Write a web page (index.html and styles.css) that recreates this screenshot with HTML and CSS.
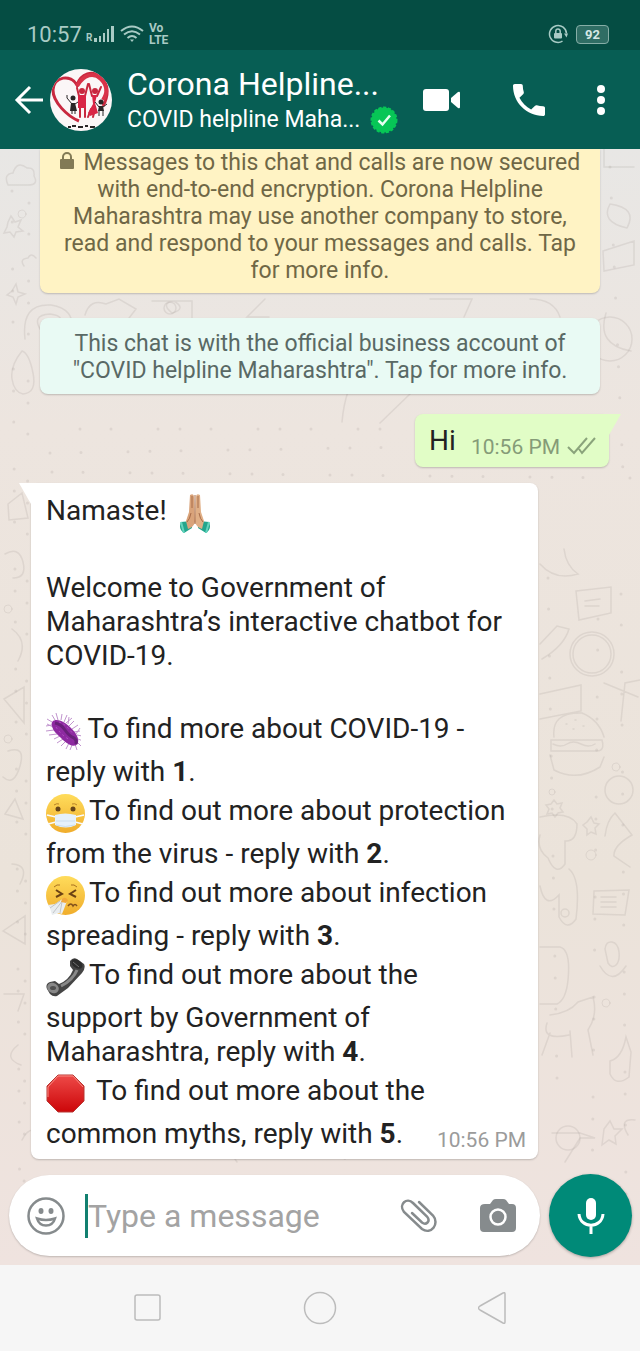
FILE: index.html
```html
<!DOCTYPE html>
<html lang="en">
<head>
  <meta charset="UTF-8" />
  <meta name="viewport" content="width=device-width, initial-scale=1.0"/>
  <title>Corona Helpline Maharashtra</title>
  <link rel="stylesheet" href="styles.css">
</head>
<body>

  <div class="status-bar">
    <div class="status-left">
      <span class="clock">10:57</span>
      <span class="roaming">R</span>
      <svg width="20" height="16" viewBox="0 0 20 16" fill="#a9cbc5"><path d="M0 12h3v4H0zM5 10h2v6H5zM9 7h2v9H9zM13 3h2v13h-2zM17 0h3v16h-3z"/></svg>
      <svg class="wifi" width="24" height="18" viewBox="0 0 24 18" fill="none" stroke="#a9cbc5" stroke-width="2"><path d="M1 6Q12-3 23 6M4 9.500Q12 3 20 9.500M7.500 13Q12 9 16.500 13"/><path d="M10 14.500h4l-2 2.500z" fill="#a9cbc5" stroke="none"/></svg>
      <span class="volte"><span>Vo</span><span>LTE</span></span>
    </div>
    <div class="status-right">
      <svg width="20" height="20" viewBox="0 0 20 20" fill="none" stroke="#a9cbc5" stroke-width="1.500"><path d="M14.500 17.200A8.500 8.500 0 1 1 18.500 9.500"/><path d="M16 9.500h4l-1.500 4z" fill="#a9cbc5" stroke="none"/><rect x="6" y="9" width="8" height="5.500" rx="1" fill="#a9cbc5" stroke="none"/><path d="M7.800 9V7.200a2.200 2.200 0 0 1 4.400 0V9"/></svg>
      <span class="battery">92</span>
    </div>
  </div>

  <header class="chat-header">
    <button class="icon-button" aria-label="Back">
      <svg width="30" height="30" viewBox="0 0 30 30" fill="none" stroke="#fff" stroke-width="3"><path d="M29 15H3M16 2L3 15l13 13"/></svg>
    </button>
    <svg class="avatar" width="62" height="62" viewBox="0 0 62 62">
      <clipPath id="face"><circle cx="31" cy="31" r="31"/></clipPath>
      <g clip-path="url(#face)">
        <rect width="62" height="62" fill="#fbf6f7"/>
        <path d="M29 52C17 47 3 33 3 21C4 7 21 5 27 16C31 4 43 1 50 8C60 16 58 28 53 37" fill="none" stroke="#c8283f" stroke-width="3"/>
        <path d="M27 17C34 5 44 3 51 10C58 17 57 25 53 31" fill="none" stroke="#d93349" stroke-width="4"/>
        <g stroke="#c8283f" stroke-width="2" stroke-linecap="round" fill="none"><path d="M29 27L27 19M35 27L38 15M30 34v14M35 34v14M42 27L39 15M47 27L51 18M41 40l-3 8M45 40l-2 8"/></g>
        <circle cx="32" cy="22" r="3" fill="#c8283f"/><circle cx="45" cy="22" r="3" fill="#c8283f"/>
        <path d="M28 26h8v13h-8zM42 26h5l-2 8 3 10-8 3-2-3 5-9z" fill="#d92545"/>
        <g fill="#292526"><circle cx="23" cy="29" r="2.500"/><circle cx="51" cy="33" r="2.500"/><path d="M21 34h4l2 8h-7zM49 37h4l1 5h-6z"/></g>
        <path d="M22 35l-5-6v-3M25 35l3-2M22 41v4M25 41v4M49 38l-4-5M53 38l4-3M49 41v6M53 41v6" stroke="#292526" stroke-width="1" fill="none"/>
        <path d="M18 58h3m1-1h4m2 1h5m2-1h3m2 1h5" stroke="#292526" stroke-width="2"/>
      </g>
    </svg>
    <div class="contact">
      <h1>Corona Helpline...</h1>
      <p>COVID helpline Maha...
        <svg width="28" height="28" viewBox="0 0 28 28"><circle cx="14" cy="14" r="12.500" fill="#07c656" stroke="#07c656" stroke-width="2" stroke-dasharray="3.200 1.600"/><path d="M8.500 14.500l4 4 7.500-9" fill="none" stroke="#e6fff0" stroke-width="2.500"/></svg>
      </p>
    </div>
    <div class="header-actions">
      <button class="icon-button" aria-label="Video call">
        <svg width="38" height="24" viewBox="0 0 38 24" fill="#fff"><rect y="1" width="26" height="22" rx="3"/><path d="M28 10l7-6q2-1 2 1v14q0 2-2 1l-7-6z"/></svg>
      </button>
      <button class="icon-button" aria-label="Voice call">
        <svg width="32" height="32" viewBox="3 3 18 18" fill="#fff"><path d="M6.620 10.790c1.440 2.830 3.760 5.140 6.590 6.590l2.200-2.200c.270-.270.670-.360 1.020-.240 1.120.370 2.330.570 3.570.570.550 0 1 .450 1 1V20c0 .550-.450 1-1 1C10.610 21 3 13.390 3 4c0-.550.450-1 1-1h3.500c.550 0 1 .450 1 1 0 1.250.200 2.450.570 3.570.110.350.030.740-.250 1.020z"/></svg>
      </button>
      <button class="icon-button" aria-label="More options">
        <svg width="8" height="30" viewBox="0 0 8 30" fill="#fff"><circle cx="4" cy="4" r="4"/><circle cx="4" cy="15" r="4"/><circle cx="4" cy="26" r="4"/></svg>
      </button>
    </div>
  </header>

  <main class="chat">
    <div class="notice notice-security">
      <svg class="lock" width="14" height="18" viewBox="0 0 14 18"><rect y="7" width="14" height="10" rx="1" fill="#827a55"/><path d="M3 8V5a4 4 0 0 1 8 0v3" fill="none" stroke="#827a55" stroke-width="2"/></svg>
      Messages to this chat and calls are now secured<br>with end-to-end encryption. Corona Helpline<br>Maharashtra may use another company to store,<br>read and respond to your messages and calls. Tap<br>for more info.
    </div>
    <div class="notice notice-business">
      This chat is with the official business account of<br>"COVID helpline Maharashtra". Tap for more info.
    </div>

    <div class="message sent">
      <span>Hi</span>
      <span class="time">10:56 PM</span>
      <svg width="29" height="19" viewBox="0 0 29 19" fill="none" stroke="#8aa37b" stroke-width="2"><path d="M1 11l6 6L20 2M12 13l3 4L28 2"/></svg>
    </div>

    <div class="message received">
      <p>Namaste!
        <svg class="emoji hands" width="32" height="39" viewBox="0 0 32 39">
          <path d="M2 28l10-1 1 7-8 5q-6-4-3-11zM30 28l-10-1-1 7 8 5q6-4 3-11z" fill="#23a58c"/>
          <path d="M2 28l3 11M30 28l-3 11" stroke="#63d4bd" stroke-width="2"/>
          <path d="M11 1q4-2 4 2l1 25q-1 5-7 7l-2-8 3-9z" fill="#d9a37a"/>
          <path d="M21 1q-4-2-4 2l-1 25q1 5 7 7l2-8-3-9z" fill="#e0af86"/>
          <path d="M16 1v29M12 19q-1 6-4 9M20 19q1 6 4 9M13 2v12M19 2v12" fill="none" stroke="#a86c49" stroke-width="1"/>
        </svg>
      </p>
      <p class="gap-before">Welcome to Government of<br>Maharashtra’s interactive chatbot for<br>COVID-19.</p>
      <p class="gap-before">
        <svg class="emoji" width="35" height="39" viewBox="2 0 35 39">
          <g stroke="#c194ce" stroke-width="1"><path d="M8 13L2 14M8 10L3 7M11 8L8 3M14 8L12 1M17 8l1-6M20 10l3-7M22 11l6-5M25 14l5-5M28 17l6-4M30 20l6-1M33 23l5 1M34 27l5 2M34 31l4 4M31 32l2 6M28 33l-2 5M25 31l-3 6M22 29l-5 5M19 27l-6 4M16 24l-6 3M13 22l-8 1M10 18l-8 1M9 15l-6-3M24 12l1-7M32 22l4-6"/></g>
          <path d="M8 14C6 7 14 6 21 11S36 24 34 31c-4 7-13-1-17-5S9 19 8 14z" fill="#8e2aa1"/>
          <path d="M11 11q6 1 10 7t9 8q3 2 2 6" stroke="#682079" stroke-width="3" fill="none"/>
          <path d="M12 15q5 8 14 13M15 10q7 2 14 12" stroke="#b455c4" stroke-width="1" stroke-dasharray="2 3" fill="none"/>
        </svg>
        To find more about COVID-19 -<br>reply with <strong>1</strong>.</p>
      <p>
        <svg class="emoji" width="39" height="39" viewBox="0 0 39 39">
          <defs><linearGradient id="skin" x2="0" y2="1"><stop offset="0" stop-color="#ffdc5b"/><stop offset="1" stop-color="#f0ad2c"/></linearGradient></defs>
          <circle cx="19.500" cy="19.500" r="19.500" fill="url(#skin)"/>
          <ellipse cx="12" cy="15" rx="2.500" ry="2.500" fill="#67451a"/><ellipse cx="27" cy="15" rx="2.500" ry="2.500" fill="#67451a"/>
          <path d="M8 11q3-2 5-1M26 10q3-1 5 1" stroke="#b98327" fill="none"/>
          <path d="M1 21l9 2M38 21l-9 2M2 30l8-2M37 30l-8-2" stroke="#f8fbff" stroke-width="1.500"/>
          <path d="M9 21q10-3 21 0v10q-10 5-21 0z" fill="#e6f1fb"/><path d="M10 27h19M10 31q9 3 19 0" stroke="#cbdeee" fill="none"/>
        </svg><span class="after-emoji">To find out more about protection</span><br>from the virus - reply with <strong>2</strong>.</p>
      <p>
        <svg class="emoji" width="39" height="39" viewBox="0 0 39 39">
          <circle cx="19.500" cy="19.500" r="19.500" fill="url(#skin)"/>
          <path d="M10 14l6 4-6 3M30 14l-6 4 6 3" stroke="#6c4214" stroke-width="2" fill="none"/>
          <path d="M8 11q3-3 6-2M25 9q3-1 6 2" stroke="#a97020" fill="none"/>
          <path d="M22 30q3-4 5 0 2-3 4 0" stroke="#82511c" stroke-width="1.500" fill="none"/>
          <path d="M18 22l3 3-3 8-2 5-4-1-6 2-2-7-2-3 7-1z" fill="#e9edf0"/><path d="M17 24L7 37M16 26l-2 11M14 25L4 32" stroke="#c2c5c7"/>
          <path d="M16 23q3-3 6 1l-2 3-5-1z" fill="#f2a83a"/>
        </svg><span class="after-emoji">To find out more about infection</span><br>spreading - reply with <strong>3</strong>.</p>
      <p>
        <svg class="emoji" width="39" height="39" viewBox="0 0 39 39">
          <path d="M24 3q3-4 7-2l7 5q2 4-2 9L22 30 11 38q-4 1-7-2l-3-5q-2-5 3-7l5-1 4 3Q23 22 27 12l-3-4z" fill="#454545"/>
          <path d="M15 28Q27 22 31 12" stroke="#898989" stroke-width="3" fill="none"/>
          <ellipse cx="7" cy="30" rx="6" ry="5" fill="#888" transform="rotate(30 7 30)"/><ellipse cx="7" cy="30" rx="3" ry="2" fill="#505050"/>
          <ellipse cx="31" cy="6" rx="6" ry="4" fill="#2c2c2c" transform="rotate(35 31 6)"/><path d="M27 4l6 5" stroke="#707070"/>
        </svg><span class="after-emoji">To find out more about the</span><br>support by Government of<br>Maharashtra, reply with <strong>4</strong>.</p>
      <p>
        <svg class="emoji" width="39" height="39" viewBox="0 0 39 39">
          <defs><linearGradient id="stop" x2="0" y2="1"><stop offset="0" stop-color="#ee4a48"/><stop offset="1" stop-color="#cc0609"/></linearGradient></defs>
          <path d="M12 1h15l11 11v15L27 38H12L1 27V12z" fill="url(#stop)" stroke="#b73632" stroke-width="1"/><path d="M2 23V13L12 2h15l10 11" fill="none" stroke="#f88c83"/>
        </svg><span class="after-stop">To find out more about the</span></p>
      <div class="last-line">
        <p>common myths, reply with <strong>5</strong>.</p>
        <span class="time">10:56 PM</span>
      </div>
    </div>

    <form class="composer">
      <div class="input-pill">
        <button type="button" class="icon-button" aria-label="Emoji">
          <svg width="38" height="38" viewBox="0 0 38 38" fill="none" stroke="#868b8d" stroke-width="2.500"><circle cx="19" cy="19" r="17.500"/><ellipse cx="14" cy="14" rx="2.500" ry="3" fill="#868b8d" stroke="none"/><ellipse cx="24" cy="14" rx="2.500" ry="3" fill="#868b8d" stroke="none"/><path d="M10 21.500q9 3 18 0q-2 7-9 7t-9-7z"/></svg>
        </button>
        <span class="caret"></span>
        <input type="text" placeholder="Type a message" aria-label="Type a message">
        <button type="button" class="icon-button" aria-label="Attach">
          <svg width="38" height="34" viewBox="0 0 38 34" fill="none" stroke="#868b8d" stroke-width="2.500" stroke-linecap="round"><path d="M19 3L33 16.500c7 8-2 20-11 13.500L4 13C-2 5 7-2 13 4L27 17.500c4 5-1 9-5 6L12 14"/></svg>
        </button>
        <button type="button" class="icon-button" aria-label="Camera">
          <svg width="36" height="34" viewBox="0 0 36 34"><path d="M5 5h5l3-4q1-1 3-1h7q2 0 3 1l3 4h3q4 0 4 4v20q0 4-4 4H4q-4 0-4-4V9q0-4 5-4z" fill="#868b8d"/><circle cx="18" cy="18" r="7.500" fill="none" stroke="#fff" stroke-width="2.500"/></svg>
        </button>
      </div>
      <button type="button" class="voice-button" aria-label="Voice message">
        <svg width="28" height="38" viewBox="0 0 28 38"><rect x="9" y="1" width="10" height="22" rx="5" fill="#fff"/><path d="M2 17c1 15 23 15 24 0M14 28v9" fill="none" stroke="#fff" stroke-width="3"/></svg>
      </button>
    </form>
  </main>

  <nav class="system-nav">
    <button class="icon-button" aria-label="Recent apps"><svg width="28" height="28" viewBox="0 0 28 28" fill="none" stroke="#bcbcbc" stroke-width="1.500"><rect x="1" y="1" width="25" height="25" rx="2"/></svg></button>
    <button class="icon-button" aria-label="Home"><svg width="34" height="34" viewBox="0 0 34 34" fill="none" stroke="#bcbcbc" stroke-width="1.500"><circle cx="17" cy="17" r="15.500"/></svg></button>
    <button class="icon-button" aria-label="System back"><svg width="28" height="32" viewBox="0 0 28 32" fill="none" stroke="#bcbcbc" stroke-width="1.500"><path d="M25 1q2-1 2 1v28q0 2-2 1L2 18q-3-2 0-4z"/></svg></button>
  </nav>

</body>
</html>
```

FILE: styles.css
```css
* {
  box-sizing: border-box;
}

body {
  margin: 0;
  min-height: 100vh;
  display: flex;
  flex-direction: column;
  font-family: Roboto, "Liberation Sans", sans-serif;
  background-color: #f6f6f6;
}

p, h1 {
  margin: 0;
  font-weight: 400;
}

svg {
  flex-shrink: 0;
}

.icon-button {
  display: flex;
  padding: 0;
  border: none;
  background: none;
  cursor: pointer;
}

/* status bar */
.status-bar {
  display: flex;
  justify-content: space-between;
  height: 50px;
  padding: 18px 31px 0 27px;
  background-color: #054d43;
  color: #a9cbc5;
}

.status-left,
.status-right {
  display: flex;
  align-items: center;
  height: 32px;
}

.clock {
  width: 59px;
  font-size: 22px;
}

.roaming {
  width: 8px;
  padding-top: 6px;
  font-size: 10px;
  font-weight: 700;
}

.wifi {
  margin: 0 5px 0 6px;
}

.volte {
  display: flex;
  flex-direction: column;
  font-size: 12px;
  font-weight: 700;
  line-height: 12px;
}

.status-right {
  gap: 8px;
}

.battery {
  width: 33px;
  border: 1px solid #86aea7;
  border-radius: 4px;
  background-color: #2f6d64;
  color: #d5e8e5;
  font-size: 13px;
  font-weight: 700;
  line-height: 17px;
  text-align: center;
}

/* chat header */
.chat-header {
  display: flex;
  align-items: center;
  height: 99px;
  padding: 0 35px 0 14px;
  background-color: #075e54;
  color: #fff;
}

.avatar {
  margin: 0 15px 0 6px;
}

.contact {
  flex: 1;
  padding-top: 4px;
  white-space: nowrap;
}

.contact h1 {
  font-size: 32px;
  line-height: 36px;
}

.contact p {
  display: flex;
  align-items: center;
  gap: 10px;
  font-size: 23px;
  line-height: 36px;
}

.header-actions {
  display: flex;
  align-items: center;
  gap: 52px;
}

/* conversation */
.chat {
  flex: 1;
  display: flex;
  flex-direction: column;
  padding-bottom: 8px;
  background-color: #ede5df;
  background-image: url("data:image/svg+xml,%3Csvg xmlns='http://www.w3.org/2000/svg' width='640' height='1116' fill='none' stroke='%23a89f99' stroke-opacity='.22' stroke-width='1.500' stroke-linecap='round'%3E%3Cg id='a'%3E%3Cpath d='M8 36q-5-11 5-12q4-13 14-5q8-1 7 8q5 9-6 9zM8 73l3-6 4 6 6-2-3 7 5 4-7 1-2 5-4-5-6 1 3-6zM24 117q-5-7 4-8q3-6 8 0M12 142l4-7 2 8 7 2-7 3-2 7-3-7-6-2zM25 190q-4-36 26-34 25 4 20 26M42 183q-12-17 8-18 18 2 7 15M22 202q-12 15-10 28t11 15q14-1 10-21t-11-22M85 166q5-17 21-11l13-5 17 10-10 13M152 152h40v21M172 164q-12-10 2-12q13 8-2 12M265 150l-18 18h22M430 150h42l-8 18M530 150q24 0 30 18M190 242l34-28 15 20M245 242h55l-12-22M360 219q-15 20-18 54M380 274l30-29M604 0v18h30M610 55q-10 18 17 24q11-20-17-24M603 102l31-10v24l-30 6zM606 164q-10 32 25 38M8 355l14-11 6 25-19 2zM5 405q14-8 18 8t-10 16M12 480q17 12 6 32M4 550l20-12v36zM8 602q18-6 12 15t-17 11M15 650l-10 15 18 5zM12 715q18 1 8 20M3 782l22-15v28zM4 845h20l-6 17M18 896q-16 13 3 20'/%3E%3Cpath d='M540 415q15 17 38 10q-12-8-14-25M576 442l35-4v26l-32 7zM585 452l15-2M585 457h14M542 510q22-13 27-30l-12-3-17 18M540 545l41-9v26l-41 8M621 572l4-38 15-3M604 534l34 14M551 602h46q8 0 5-11H551zM554 588q-3-25 28-24q17 7 22 24M550 606l4 15q23 12 46-3l4-10M540 668q29-6 37 7 0 18-12 17v23q-9 13-17-6-12-9-8-23M605 687q2-16 10-23l17 22q-19 11-18 21l16 11M569 720q12 10 7 50-9 13-17-2v-22q-14 15-19-9M594 742l35-1-4 25-32-1zM601 748h15M601 753h15M601 758h15M540 798h20q11 3 8 33-2 20-11 24h-17M605 800q1-8 7-7t7 10-3 13-8-2zM600 817q12 21 26 0M550 866q19-2 28-13l15-5q5 18-5 33l5 25M570 882l2 26M547 874q-6 18 22 12M550 884l-8 22M610 912q12-3 16-24l5 15-2 25q-13 10-19-3zM22 991q10-20 24 0t13-12M150 996q13 23 24 0M225 995l12 18M320 995l25 15M552 984h28l15 5h-15l-15 24M604 980l6-8 4 8h8l-7 7 1 8-7-4-7 5 1-8zM628 986q-10-17 7-15'/%3E%3C/g%3E%3Cpath d='M566 575h1M575 571h1M583 577h1M573 580h1M553 595q8 4 14 0t14 0 14 0M551 655l3-4 3 4 5-1-2 5 3 4-5 1-3 4-3-4-5 1 2-5-3-4zM587 673l4-5 3 6 5 1-4 4 1 6-5-2-4 3v-6l-4-4z'/%3E%3Ccircle cx='592' cy='505' r='22'/%3E%3Ccircle cx='592' cy='505' r='19'/%3E%3Ccircle cx='619' cy='641' r='14'/%3E%3Ccircle cx='170' cy='159' r='6'/%3E%3Ccircle cx='610' cy='190' r='22'/%3E%3Ccircle cx='565' cy='764' r='4'/%3E%3Ccircle cx='568' cy='989' r='12'/%3E%3Cg stroke-width='3' stroke-dasharray='0 31 0 47 0 22'%3E%3Cpath d='M12 42L20 1082M29 54L24 1054M548 429l9 500M598 470l-6 580M621 445l5 600M610 18l14 330M50 304l360-6M52 323l580 6M80 280h330'/%3E%3C/g%3E%3Cg stroke-width='1'%3E%3Ccircle cx='22' cy='65' r='4'/%3E%3Ccircle cx='8' cy='460' r='4'/%3E%3Ccircle cx='8' cy='590' r='4'/%3E%3Ccircle cx='552' cy='643' r='3'/%3E%3Ccircle cx='591' cy='706' r='5'/%3E%3Ccircle cx='606' cy='854' r='4'/%3E%3Ccircle cx='616' cy='618' r='4'/%3E%3C/g%3E%3C/svg%3E"), linear-gradient(#e8e7e5, #ede5df 25%, #ebe3da 65%, #efe3df);
}

.notice {
  margin: 0 40px;
  border-radius: 8px;
  box-shadow: 0 1px 2px rgba(0, 0, 0, 0.2);
  font-size: 23px;
  line-height: 27px;
  text-align: center;
}

.notice-security {
  padding-bottom: 9px;
  border-radius: 0 0 8px 8px;
  background-color: #fff3c4;
  color: #6f6746;
}

.lock {
  margin-right: 4px;
}

.notice-business {
  margin-top: 25px;
  padding: 12px 0 10px;
  background-color: #e9faf4;
  color: #596965;
}

.message {
  position: relative;
  border-radius: 8px;
  box-shadow: 0 1px 2px rgba(0, 0, 0, 0.2);
  color: #222;
  font-size: 28px;
  line-height: 34px;
}

/* bubble tails */
.message::before {
  content: "";
  position: absolute;
  top: 0;
  width: 20px;
  height: 21px;
  background-color: inherit;
}

.sent {
  align-self: flex-end;
  display: flex;
  align-items: center;
  height: 53px;
  margin: 20px 31px 0 0;
  padding: 0 13px 0 14px;
  background-color: #e1fdc6;
}

.sent::before {
  right: -12px;
  clip-path: polygon(0 0, 100% 0, 40% 100%, 0 100%);
}

.sent .time {
  margin: 12px 7px 0 15px;
  color: #859b78;
}

.sent svg {
  margin-top: 9px;
}

.received {
  margin: 16px 102px 0 31px;
  padding: 6px 12px 8px 15px;
  background-color: #fff;
}

.received::before {
  left: -12px;
  clip-path: polygon(0 0, 100% 0, 100% 100%, 60% 100%);
}

.time {
  color: #9b9b9b;
  font-size: 21px;
  line-height: 22px;
}

.emoji {
  margin: 5px 0 4px;
  vertical-align: middle;
}

.hands {
  margin-left: 5px;
}

.gap-before {
  margin-top: 34px;
}

.after-emoji {
  margin-left: 4px;
}

.after-stop {
  margin-left: 11px;
}

.last-line {
  display: flex;
  justify-content: space-between;
  align-items: flex-end;
}

/* message box */
.composer {
  display: flex;
  align-items: center;
  gap: 9px;
  margin-top: auto;
  padding: 0 8px 0 9px;
}

.input-pill {
  flex: 1;
  display: flex;
  align-items: center;
  min-width: 0;
  height: 81px;
  padding: 0 24px 0 18px;
  border-radius: 41px;
  background-color: #fff;
  box-shadow: 0 1px 2px rgba(0, 0, 0, 0.2);
}

.caret {
  width: 3px;
  height: 44px;
  margin-left: 20px;
  background-color: #128070;
}

.input-pill input {
  flex: 1;
  min-width: 0;
  padding: 0;
  border: none;
  outline: none;
  background: none;
  color: #222;
  font-family: inherit;
  font-size: 32px;
}

.input-pill input::placeholder {
  color: #a3a3a3;
}

.input-pill input + .icon-button {
  margin-right: 42px;
}

.voice-button {
  flex-shrink: 0;
  display: flex;
  align-items: center;
  justify-content: center;
  width: 83px;
  height: 83px;
  padding: 0;
  border: none;
  border-radius: 50%;
  background-color: #008a78;
  box-shadow: 0 1px 3px rgba(0, 0, 0, 0.3);
  cursor: pointer;
}

/* phone navigation */
.system-nav {
  display: flex;
  align-items: center;
  justify-content: space-between;
  height: 86px;
  padding: 0 21%;
  background-color: #f6f6f6;
}
```
